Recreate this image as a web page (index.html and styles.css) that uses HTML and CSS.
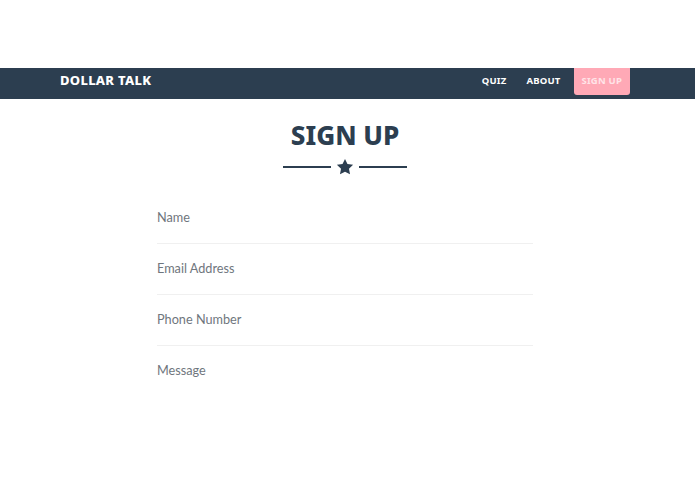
FILE: index.html
```html
<!DOCTYPE html>
<html>
<head>
<meta charset="utf-8">
<link rel="stylesheet" href="styles.css">
</head>
<body>
<nav class="navbar">
  <div class="nav-inner">
    <a class="brand">DOLLAR TALK</a>
    <ul class="nav-links">
      <li><a class="nav-link">QUIZ</a></li>
      <li><a class="nav-link">ABOUT</a></li>
      <li><a class="nav-link active">SIGN UP</a></li>
    </ul>
  </div>
</nav>
<section class="signup">
  <h2 class="title">SIGN UP</h2>
  <div class="divider">
    <span class="line"></span>
    <svg class="star" viewBox="0 0 24 24" width="18" height="18"><path d="M12 1.2l3.3 6.9 7.5 1-5.5 5.2 1.4 7.5L12 18.2l-6.7 3.6 1.4-7.5L1.2 9.1l7.5-1z" fill="#2c3e50"/></svg>
    <span class="line"></span>
  </div>
  <form class="form">
    <div class="field"><input class="input" type="text" placeholder="Name"></div>
    <div class="field"><input class="input" type="text" placeholder="Email Address"></div>
    <div class="field"><input class="input" type="text" placeholder="Phone Number"></div>
    <div class="field last"><input class="input" type="text" placeholder="Message"></div>
  </form>
</section>
</body>
</html>
```

FILE: styles.css
```css
html, body {
  margin: 0;
  padding: 0;
  background: #fff;
}
body {
  padding-top: 68px;
  font-family: "Noto Sans", "Liberation Sans", sans-serif;
}
.navbar {
  background: #2c3e50;
  height: 31px;
}
.nav-inner {
  width: 690px;
  box-sizing: border-box;
  display: flex;
  align-items: flex-start;
  justify-content: space-between;
  padding: 0 60px;
  height: 100%;
}
.brand {
  color: #fff;
  font-weight: 800;
  font-size: 13px;
  line-height: 25px;
  letter-spacing: 0.3px;
}
.nav-links {
  list-style: none;
  margin: 0;
  padding: 0;
  display: flex;
  align-items: flex-start;
}
.nav-link {
  display: block;
  color: #fff;
  font-weight: 700;
  font-size: 9.5px;
  letter-spacing: 0.2px;
  line-height: 25px;
  padding: 0 10px;
  height: 25px;
}
.nav-links li:first-child .nav-link { padding-left: 0; }
.nav-link.active {
  background: #ffa9b6;
  color: #ffe4e8;
  height: 27px;
  line-height: 25px;
  padding: 0 8px 0 8px;
  border-radius: 0 0 3px 3px;
  margin-left: 3px;
}
.signup {
  width: 690px;
  display: flex;
  flex-direction: column;
  align-items: center;
}
.title {
  margin: 18px 0 0;
  font-size: 26px;
  font-weight: 800;
  color: #2c3e50;
  line-height: 36px;
  letter-spacing: 0;
}
.divider {
  display: flex;
  align-items: center;
  gap: 5px;
  margin-top: 5px;
}
.line {
  width: 48px;
  height: 2px;
  background: #2c3e50;
}
.star { display: block; }
.form {
  width: 376px;
  margin-top: 17px;
}
.field {
  height: 50px;
  border-bottom: 1px solid #f0f0f0;
  display: flex;
  align-items: center;
  padding-bottom: 0;
}
.field.last { border-bottom: none; }
.input {
  border: none;
  outline: none;
  padding: 0 0 2px;
  width: 100%;
  font-family: Lato, "Liberation Sans", sans-serif;
  font-size: 12.7px;
  color: #6c757d;
  background: transparent;
}
.input::placeholder {
  color: #6f767d;
  opacity: 1;
}
```
